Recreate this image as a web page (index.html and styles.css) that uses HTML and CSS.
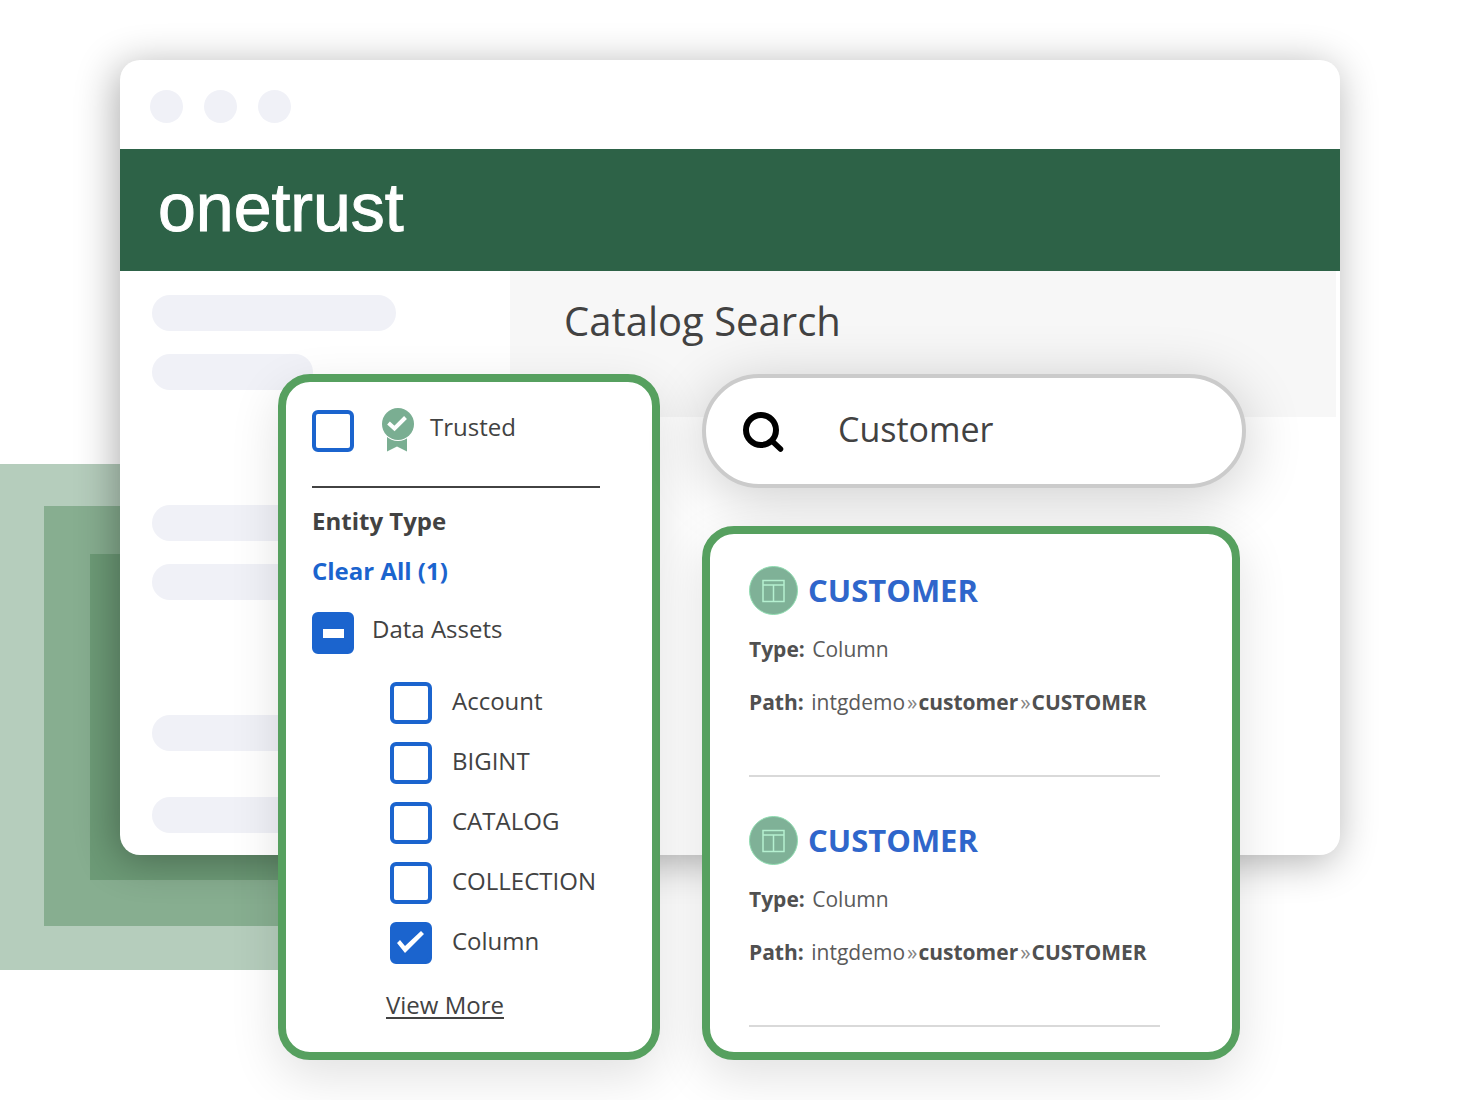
FILE: index.html
```html
<!DOCTYPE html>
<html lang="en">
<head>
  <meta charset="utf-8">
  <meta name="viewport" content="width=device-width, initial-scale=1">
  <title>OneTrust Catalog Search</title>
  <link rel="stylesheet" href="styles.css">
</head>
<body>
  <main class="scene">
    <div class="backdrop" aria-hidden="true"><div class="backdrop-mid"><div class="backdrop-inner"></div></div></div>

    <section class="window">
      <div class="titlebar" aria-hidden="true"><span class="dot"></span><span class="dot"></span><span class="dot"></span></div>
      <header class="brand-bar"><span class="brand">onetrust</span></header>
      <div class="window-body">
        <div class="skeleton" aria-hidden="true">
          <div class="bar-group"><span class="bar"></span><span class="bar bar-short"></span></div>
          <div class="bar-group"><span class="bar"></span><span class="bar"></span></div>
          <div class="bar-group bar-group-loose"><span class="bar"></span><span class="bar"></span></div>
        </div>
        <div class="page-head"><h1 class="page-title">Catalog Search</h1></div>
      </div>
    </section>

    <div class="overlay">
      <form class="card filters">
        <div class="option option-trusted">
          <input class="check" type="checkbox" id="trusted">
          <svg class="ribbon" width="32" height="46" viewBox="0 0 32 46" aria-hidden="true">
            <path d="M5 29H25V43.500L15 38.500L5 43.500Z" fill="#7aae92"/>
            <circle cx="16" cy="16" r="17" fill="#fff"/>
            <circle cx="16" cy="16" r="16" fill="#7aae92"/>
            <path d="M6.500 15L12.500 20.500L23.500 9.500" fill="none" stroke="#fff" stroke-width="4"/>
          </svg>
          <label class="option-label" for="trusted">Trusted</label>
        </div>
        <hr class="rule">
        <h2 class="filter-title">Entity Type</h2>
        <button class="clear" type="button">Clear All (1)</button>
        <div class="option option-parent">
          <input class="check check-mixed" type="checkbox" id="assets" aria-checked="mixed">
          <label class="option-label" for="assets">Data Assets</label>
        </div>
        <div class="sub-options">
          <div class="option"><input class="check" type="checkbox" id="account"><label class="option-label" for="account">Account</label></div>
          <div class="option"><input class="check" type="checkbox" id="bigint"><label class="option-label" for="bigint">BIGINT</label></div>
          <div class="option"><input class="check" type="checkbox" id="catalog"><label class="option-label" for="catalog">CATALOG</label></div>
          <div class="option"><input class="check" type="checkbox" id="collection"><label class="option-label" for="collection">COLLECTION</label></div>
          <div class="option"><input class="check" type="checkbox" id="column" checked><label class="option-label" for="column">Column</label></div>
        </div>
        <a class="more" href="#more">View More</a>
      </form>

      <div class="main-column">
        <div class="search">
          <svg class="search-icon" width="42" height="42" viewBox="0 0 42 42" aria-hidden="true">
            <circle cx="19" cy="20" r="15" fill="none" stroke="#000" stroke-width="6"/>
            <path d="M30 31L38.500 39" stroke="#000" stroke-width="5.500" stroke-linecap="round"/>
          </svg>
          <input class="search-input" type="text" value="Customer" aria-label="Search the catalog">
        </div>

        <section class="card results">
          <article class="result">
            <div class="result-head">
              <svg width="49" height="49" viewBox="0 0 49 49" aria-hidden="true">
                <circle cx="24.500" cy="24.500" r="24" fill="#7fb197" stroke="#8fdcb0"/>
                <path d="M14 14.500H35V35.500H14ZM14 19H35M24.500 19V35" fill="none" stroke="#b5f0d0" stroke-width="1.500"/>
              </svg>
              <a class="result-link" href="#customer-1">CUSTOMER</a>
            </div>
            <p class="meta"><b class="meta-key">Type:</b> Column</p>
            <p class="meta meta-path"><b class="meta-key">Path:</b> intgdemo<span class="sep">»</span><b>customer</b><span class="sep">»</span><b>CUSTOMER</b></p>
          </article>
          <article class="result">
            <div class="result-head">
              <svg width="49" height="49" viewBox="0 0 49 49" aria-hidden="true">
                <circle cx="24.500" cy="24.500" r="24" fill="#7fb197" stroke="#8fdcb0"/>
                <path d="M14 14.500H35V35.500H14ZM14 19H35M24.500 19V35" fill="none" stroke="#b5f0d0" stroke-width="1.500"/>
              </svg>
              <a class="result-link" href="#customer-2">CUSTOMER</a>
            </div>
            <p class="meta"><b class="meta-key">Type:</b> Column</p>
            <p class="meta meta-path"><b class="meta-key">Path:</b> intgdemo<span class="sep">»</span><b>customer</b><span class="sep">»</span><b>CUSTOMER</b></p>
          </article>
        </section>
      </div>
    </div>
  </main>
</body>
</html>
```
FILE: styles.css
```css
* { box-sizing: border-box; }

body {
  margin: 0;
  background: #fff;
  color: #424242;
  font-family: "Open Sans", "Noto Sans", sans-serif;
  font-size: 24px;
  line-height: 32px;
}

h1, h2, p { margin: 0; }

/* The window and the floating cards share one grid cell. */
.scene {
  position: relative;
  display: grid;
  grid-template-columns: minmax(0, 1fr);
  padding: 60px 120px 40px;
  overflow: hidden;
}

.backdrop {
  position: absolute;
  top: 464px;
  left: 0;
  width: 506px;
  padding: 42px 42px 44px 44px;
  background: #b5cdbc;
}
.backdrop-mid { padding: 48px 48px 46px 46px; background: #87ae90; }
.backdrop-inner { height: 326px; background: #6d9b77; }

.window {
  position: relative;
  grid-area: 1 / 1;
  align-self: start;
  overflow: hidden;
  border-radius: 20px;
  background: #fff;
  box-shadow: -4px 6px 40px rgba(0, 0, 0, .32);
}
.titlebar { display: flex; gap: 21px; padding: 30px 30px 26px; }
.dot { width: 33px; height: 33px; border-radius: 50%; background: #f0f1f7; }

.brand-bar { padding: 18px 38px 24px; background: #2d6247; }
.brand {
  display: block;
  color: #fff;
  font-family: "Liberation Sans", Arial, sans-serif;
  font-size: 68px;
  line-height: 80px;
  -webkit-text-stroke: 1px #fff;
}

.window-body { display: flex; align-items: flex-start; padding-right: 4px; }
.skeleton {
  flex: 0 0 390px;
  display: flex;
  flex-direction: column;
  gap: 115px;
  padding: 24px 32px 22px;
}
.bar-group { display: flex; flex-direction: column; gap: 23px; }
.bar-group-loose { gap: 46px; }
.bar { width: 244px; height: 36px; border-radius: 18px; background: #f0f1f7; }
.bar-short { width: 161px; }

.page-head { flex: 1; padding: 22px 54px 68px; background: #f7f7f7; }
.page-title { font-size: 40px; font-weight: 400; line-height: 56px; }

.overlay {
  position: relative;
  grid-area: 1 / 1;
  display: grid;
  grid-template-columns: 382px minmax(0, 1fr);
  gap: 42px;
  margin: 314px 94px 0 158px;
}

.card {
  border: 8px solid #56a05f;
  border-radius: 32px;
  background: #fff;
  box-shadow: 0 16px 50px rgba(0, 0, 0, .12);
}

.filters {
  display: flex;
  flex-direction: column;
  align-items: flex-start;
  padding: 28px 26px 31px;
}
.option { display: flex; align-items: center; gap: 20px; }
.option-trusted { gap: 16px; height: 42px; }
.option-parent { gap: 18px; margin-top: 25px; }
.option-label { padding-bottom: 4px; }
.option-trusted .option-label,
.option-parent .option-label { padding-bottom: 8px; }
.ribbon { margin-left: 12px; }

.check {
  appearance: none;
  width: 42px;
  height: 42px;
  margin: 0;
  border: 4px solid #1b64ce;
  border-radius: 6px;
  background: #fff;
}
.check:checked, .check-mixed { background: #1b64ce; }
.check:checked::before, .check-mixed::before {
  content: "";
  display: block;
  height: 34px;
  background: #fff;
}
.check:checked::before { clip-path: polygon(3px 17px, 6px 14px, 11px 20px, 27px 5px, 30px 8px, 11px 27px); }
.check-mixed::before { clip-path: polygon(7px 13px, 28px 13px, 28px 22px, 7px 22px); }

.rule { width: 288px; height: 2px; margin: 34px 0 17px; border: 0; background: #424242; }
.filter-title { font-size: 24px; font-weight: 700; line-height: 32px; }
.clear {
  margin-top: 18px;
  padding: 0;
  border: 0;
  background: none;
  color: #1b64ce;
  font: inherit;
  font-weight: 700;
}
.sub-options { display: flex; flex-direction: column; gap: 18px; margin: 28px 0 25px 78px; }
.more { margin-left: 74px; color: inherit; text-underline-offset: 3px; text-decoration-thickness: 2px; }

.main-column { display: flex; flex-direction: column; gap: 38px; }
.search {
  display: flex;
  align-items: center;
  gap: 54px;
  padding: 29px 36px;
  border: 4px solid #cbcbcb;
  border-radius: 57px;
  background: #fff;
  box-shadow: 0 10px 60px rgba(0, 0, 0, .2);
}
.search-icon { flex: none; }
.search-input {
  flex: 1;
  min-width: 0;
  height: 48px;
  padding: 0 0 4px;
  border: 0;
  outline: 0;
  background: none;
  color: inherit;
  font: inherit;
  font-size: 34px;
}

.results { margin-right: 6px; padding: 32px 72px 25px 39px; }
.result { padding-bottom: 58px; border-bottom: 2px solid #d9d9d9; }
.result + .result { margin-top: 39px; }
.result-head { display: flex; align-items: center; gap: 10px; height: 49px; margin-bottom: 19px; }
.result-link { padding-bottom: 2px; color: #2f66cb; font-size: 31px; font-weight: 700; line-height: 40px; text-decoration: none; }
.meta { color: #5a5a5a; font-size: 21px; line-height: 30px; white-space: nowrap; }
.meta b { color: #505050; }
.meta-key { margin-right: 2px; }
.sep { margin: 0 1px 0 2px; color: #858585; }
.meta-path { margin-top: 23px; }
```
